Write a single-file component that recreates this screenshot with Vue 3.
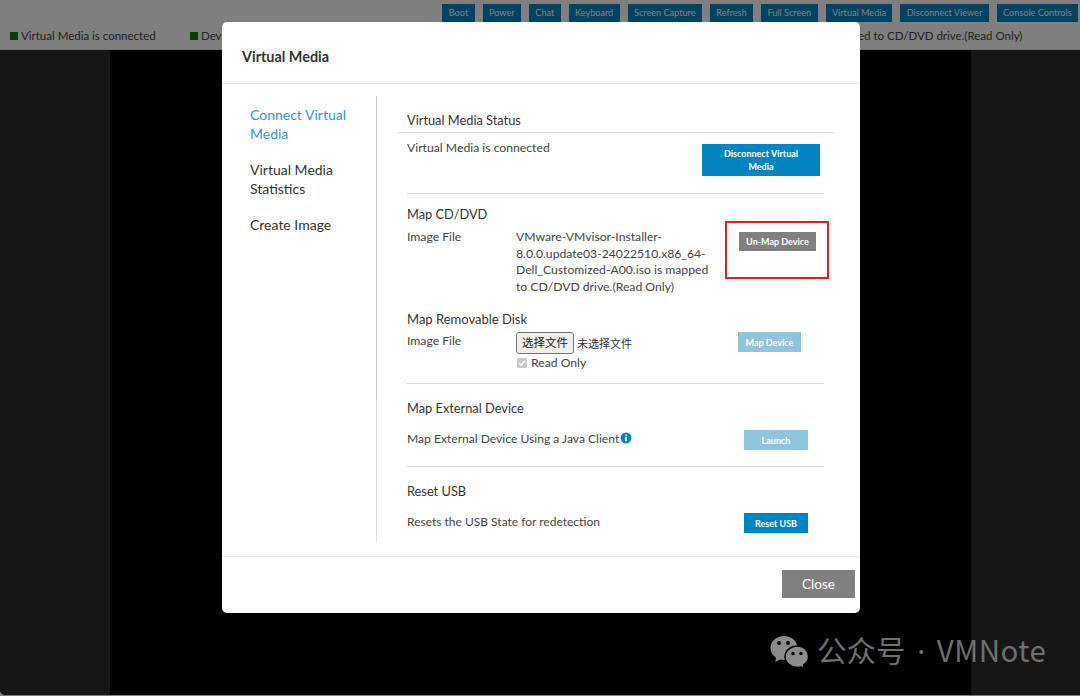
<script setup>
const topButtons = ['Boot','Power','Chat','Keyboard','Screen Capture','Refresh','Full Screen','Virtual Media','Disconnect Viewer','Console Controls']
</script>

<template>
  <div class="page">
    <header class="topbar">
      <div class="toolbar">
        <button v-for="b in topButtons" :key="b" class="tool">{{ b }}</button>
      </div>
      <div class="statusline">
        <span class="stat s1"><i class="sq"></i>Virtual Media is connected</span>
        <span class="stat s2"><i class="sq"></i>Device Connected</span>
        <span class="stat s3">Image File is mapped to CD/DVD drive.(Read Only)</span>
      </div>
    </header>
    <main class="stage">
      <div class="side"></div>
      <div class="screen"></div>
      <div class="side"></div>
    </main>

    <div class="backdrop"></div>

    <section class="modal">
      <div class="modal-head">Virtual Media</div>
      <div class="modal-body">
        <nav class="nav">
          <a class="active">Connect Virtual Media</a>
          <a>Virtual Media Statistics</a>
          <a>Create Image</a>
        </nav>
        <div class="divider"><i></i><b></b></div>
        <div class="content">
          <h4 class="status-head">Virtual Media Status</h4>
          <div class="row status-row">
            <span class="txt">Virtual Media is connected</span>
            <button class="btn blue wide">Disconnect Virtual Media</button>
          </div>
          <hr class="r1" />
          <h4 class="h-cd">Map CD/DVD</h4>
          <div class="row cd-row">
            <span class="label">Image File</span>
            <span class="value">VMware-VMvisor-Installer-<br />8.0.0.update03-24022510.x86_64-<br />Dell_Customized-A00.iso is mapped<br />to CD/DVD drive.(Read Only)</span>
            <button class="btn grey unmap">Un-Map Device</button>
          </div>
          <h4 class="h-rem">Map Removable Disk</h4>
          <div class="row rem-row">
            <span class="label rem-label">Image File</span>
            <div class="value file">
              <div class="fileline"><span class="filebtn">选择文件</span><span class="nofile">未选择文件</span></div>
              <label class="ro"><svg class="check" viewBox="0 0 10 10"><rect width="10" height="10" rx="1.5" fill="#c9c9c9"/><path d="M2.2 5.2 4.2 7.2 7.9 2.8" fill="none" stroke="#fff" stroke-width="1.5"/></svg>Read Only</label>
            </div>
            <button class="btn pale mapdev">Map Device</button>
          </div>
          <hr class="r2" />
          <h4 class="h-ext">Map External Device</h4>
          <div class="row ext-row">
            <span class="txt">Map External Device Using a Java Client<svg class="info" viewBox="0 0 12 12"><circle cx="6" cy="6" r="5.5" fill="#0085c3"/><rect x="5.1" y="5" width="1.8" height="4.2" fill="#fff"/><rect x="5.1" y="2.6" width="1.8" height="1.6" fill="#fff"/></svg></span>
            <button class="btn pale act">Launch</button>
          </div>
          <hr class="r3" />
          <h4 class="h-usb">Reset USB</h4>
          <div class="row usb-row">
            <span class="txt">Resets the USB State for redetection</span>
            <button class="btn blue act">Reset USB</button>
          </div>
        </div>
      </div>
      <div class="modal-foot"><button class="close">Close</button></div>
    </section>

    <div class="redbox"></div>

    <div class="mark">
      <svg class="wechat" viewBox="0 0 41 34">
        <path fill="#8c8c8c" d="M15 2C7.5 2 1.5 7.3 1.5 14c0 4 2.100 7.500 5.500 9.800L6.300 28l4.700-2.400c1.300.3 2.600.5 4 .5 7.500 0 13.500-5.400 13.500-12.100S22.500 2 15 2Z"/>
        <path fill="#8c8c8c" stroke="#000" stroke-width="1.5" d="M28.500 12C21.600 12 16 16.800 16 22.700s5.600 10.700 12.500 10.700c1.200 0 2.300-.1 3.400-.4l3.300 1-.6-3.100c3-2 5-4.800 5-8.200C39.600 16.800 35.400 12 28.500 12Z"/>
        <circle cx="10" cy="9" r="1.900" fill="#000"/><circle cx="19" cy="9" r="1.900" fill="#000"/>
        <circle cx="24" cy="19.500" r="1.700" fill="#000"/><circle cx="32" cy="19.500" r="1.700" fill="#000"/>
      </svg>
      <span class="mark-text">公众号<span class="dot"> · </span><span class="latin">VMNote</span></span>
    </div>
  </div>
</template>

<style>
html, body { margin: 0; background: #000; }
</style>

<style scoped>
* { box-sizing: border-box; }
.page {
  position: relative; width: 1080px; height: 696px; overflow: hidden;
  display: flex; flex-direction: column; background: #fff;
  font-family: "Lato", "Noto Sans CJK SC", sans-serif; color: #444;
}
.topbar { height: 50px; background: #fff; border-bottom: 1px solid #e8e8e8; }
.toolbar { display: flex; justify-content: flex-end; gap: 8px; padding: 4px 2px 0 0; }
.tool {
  height: 18px; padding: 0 6.4px; border: 0; background: #0085c3; color: #fff;
  font: 9.15px/18px "Lato", sans-serif; white-space: nowrap;
}
.statusline { display: flex; padding-top: 6px; font-size: 11.5px; line-height: 16px; color: #444; white-space: nowrap; }
.stat { display: flex; align-items: center; }
.s1 { margin-left: 10px; width: 180px; }
.s2 { width: 200px; }
.s3 { margin-left: 375px; }
.sq { width: 8px; height: 8px; background: #0a7d0a; margin-right: 3px; }
.stage { flex: 1; display: flex; background: #000; border-bottom: 1px solid #fff; border-bottom-left-radius: 6px; overflow: hidden; }
.side { width: 110px; background: #2c2c2c; }
.side:last-child { width: 109px; }
.screen { flex: 1; background: #000; }
.backdrop { position: absolute; inset: 0; background: rgba(0,0,0,.5); }

.modal {
  position: absolute; left: 222px; top: 22px; width: 638px; height: 591px;
  background: #fff; border-radius: 5px; display: flex; flex-direction: column;
}
.modal-head { height: 62px; padding: 26px 20px 0; border-bottom: 1px solid #e5e5e5; font-size: 14.4px; line-height: 17px; font-weight: 700; color: #333; }
.modal-body { flex: none; height: 473px; padding-top: 12px; display: flex; border-bottom: 1px solid #e9e9e9; }
.nav { width: 154px; padding: 9px 20px 0 28px; display: flex; flex-direction: column; gap: 17px; font-size: 14px; line-height: 19px; color: #333; }
.nav .active { color: #2e96dc; }
.divider { width: 1px; height: 446px; display: flex; flex-direction: column; }
.divider i { height: 304px; background: #c4c4c4; }
.divider b { flex: 1; background: #e2e2e2; }
.content { width: 483px; padding-left: 30px; padding-right: 36px; font-size: 12.2px; line-height: 17px; color: #444; }
h4 { margin: 0; font-size: 12.8px; line-height: 17px; font-weight: 400; color: #333; }
hr { margin: 0; border: 0; border-top: 1px solid #d9d9d9; }
.status-head { margin: 16px -10px 0 -9px; padding: 0 0 3px 9px; border-bottom: 1px solid #dcdcdc; }
.row { display: flex; align-items: flex-start; }
.btn { border: 0; color: #fff; font: 700 9px/13px "Lato", sans-serif; padding: 0; white-space: nowrap; }
.blue { background: #0085c3; }
.grey { background: #808080; }
.pale { background: #8fc4dd; }
.status-row { justify-content: space-between; height: 60px; padding: 6px 4px 0 0; }
.wide { width: 118px; height: 32px; margin-top: 5px; padding: 0 18px; white-space: normal; }
.h-cd { margin-top: 12px; }
.cd-row { margin-top: 6px; height: 69px; }
.label { width: 109px; flex: none; line-height: 16px; }
.rem-label { margin-top: 1px; }
.value { width: 214px; flex: none; line-height: 16.7px; }
.unmap { width: 77px; height: 19px; margin: 3px 0 0 9px; }
.h-rem { margin-top: 13px; font-size: 13px; }
.rem-row { margin-top: 4px; height: 51px; }
.file { line-height: 17px; }
.fileline { display: flex; align-items: center; height: 22px; }
.filebtn { width: 58px; height: 22px; background: #efefef; border: 1px solid #767676; border-radius: 3px; color: #222; font-size: 11.5px; line-height: 20px; text-align: center; }
.nofile { margin-left: 3px; font-size: 11px; color: #333; }
.ro { display: flex; align-items: center; }
.check { width: 10px; height: 10px; margin: 0 4px 0 1px; }
.mapdev { width: 63px; height: 20px; margin: 0 0 0 8px; }
.h-ext { margin-top: 16px; }
.ext-row { justify-content: space-between; height: 49px; padding: 13px 16px 0 0; font-size: 12.1px; }
.info { width: 12px; height: 12px; margin-left: 1px; vertical-align: -1px; }
.act { width: 64px; height: 20px; }
.h-usb { margin-top: 16px; }
.usb-row { justify-content: space-between; padding: 13px 16px 0 0; font-size: 12px; }
.modal-foot { flex: 1; display: flex; justify-content: flex-end; padding: 13px 5px 0 0; }
.close { width: 73px; height: 28px; border: 0; background: #808080; color: #fff; font: 13.5px "Lato", sans-serif; }

.redbox { position: absolute; left: 725px; top: 221px; width: 104px; height: 58px; border: 2px solid #ed1c24; }
.mark { position: absolute; left: 769px; top: 631px; display: flex; align-items: center; gap: 7px; color: #6f6f6f; }
.wechat { width: 41px; height: 34px; }
.mark-text { margin-top: -2px; font: 29.5px/40px "Noto Sans CJK SC", sans-serif; white-space: pre; }
.dot { font-family: "Noto Sans", sans-serif; padding: 0 4px; }
.latin { letter-spacing: .5px; }
</style>
